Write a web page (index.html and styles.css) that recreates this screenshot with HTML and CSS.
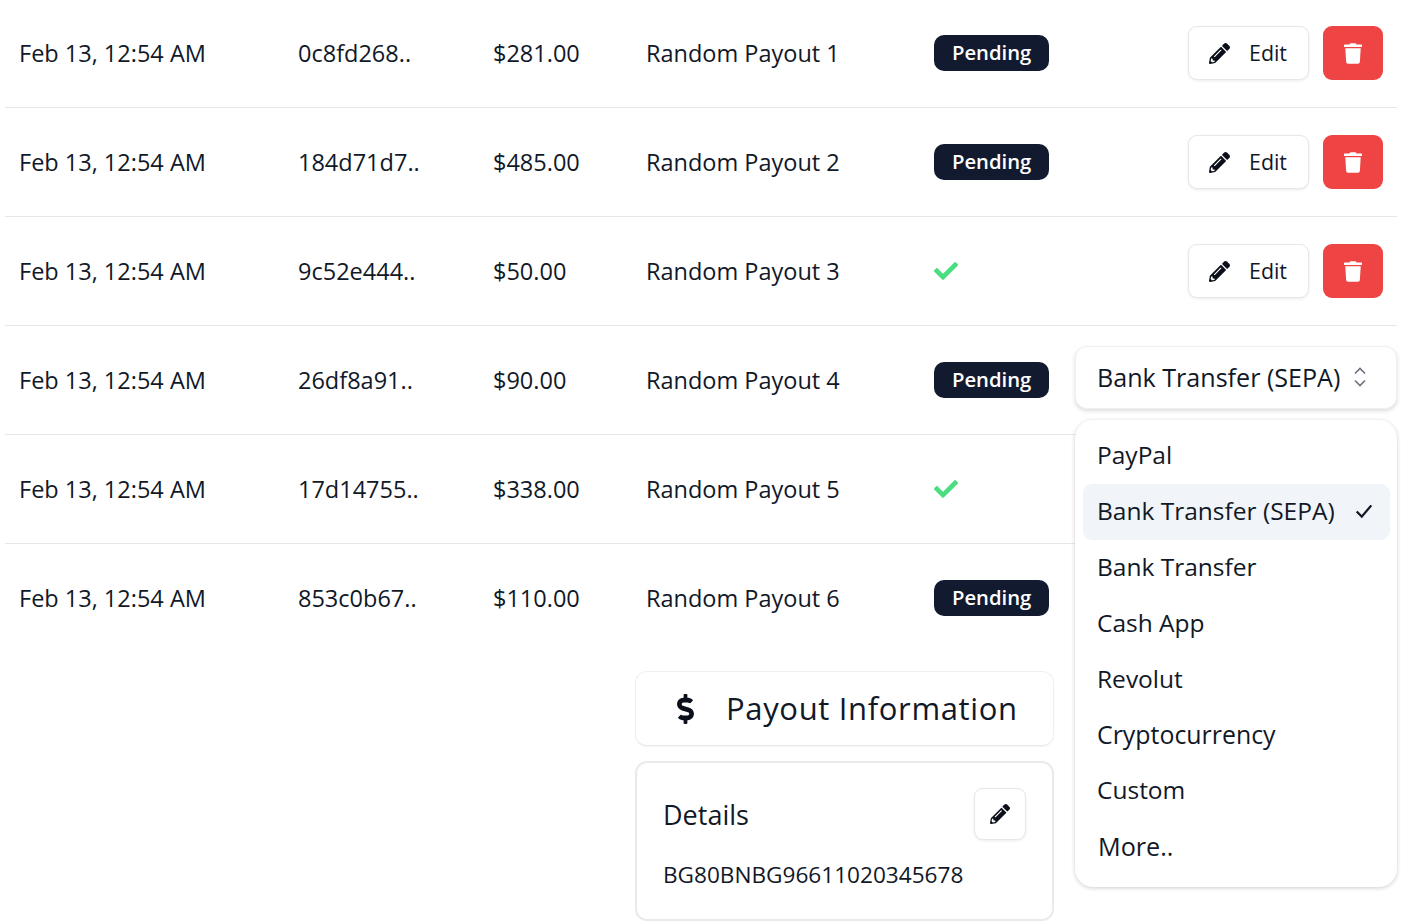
FILE: index.html
```html
<!DOCTYPE html>
<html>
<head>
	<title>Payouts</title>
	<meta charset="UTF-8">
	<link rel="stylesheet" href="styles.css">
</head>
<body>
	<svg class="icon-defs" aria-hidden="true">
		<symbol id="i-pencil" viewBox="0 0 512 512"><path d="M497.9 142.1l-46.1 46.1c-4.7 4.7-12.3 4.7-17 0l-111-111c-4.7-4.7-4.7-12.3 0-17l46.1-46.1c18.7-18.7 49.1-18.7 67.9 0l60.1 60.1c18.8 18.7 18.8 49.1 0 67.9zM284.2 99.8L21.6 362.4.4 483.9c-2.9 16.4 11.4 30.6 27.8 27.8l121.5-21.3 262.6-262.6c4.7-4.7 4.7-12.3 0-17l-111-111c-4.8-4.7-12.4-4.7-17.1 0zM124.1 339.9c-5.5-5.5-5.5-14.3 0-19.8l154-154c5.5-5.5 14.3-5.5 19.8 0s5.5 14.3 0 19.8l-154 154c-5.5 5.5-14.3 5.5-19.8 0zM88 424h48v36.3l-64.5 11.3-31.1-31.1L51.7 376H88v48z"/></symbol>
		<symbol id="i-trash" viewBox="0 0 448 512"><path d="M432 32H312l-9.4-18.7A24 24 0 0 0 281.1 0H166.8a23.72 23.72 0 0 0-21.4 13.3L136 32H16A16 16 0 0 0 0 48v32a16 16 0 0 0 16 16h416a16 16 0 0 0 16-16V48a16 16 0 0 0-16-16zM53.2 467a48 48 0 0 0 47.9 45h245.8a48 48 0 0 0 47.9-45L416 128H32z"/></symbol>
		<symbol id="i-check" viewBox="0 0 512 512"><path d="M173.898 439.404l-166.4-166.4c-9.997-9.997-9.997-26.206 0-36.204l36.203-36.204c9.997-9.998 26.207-9.998 36.204 0L192 312.69 432.095 72.596c9.997-9.997 26.207-9.997 36.204 0l36.203 36.204c9.997 9.997 9.997 26.206 0 36.204l-294.4 294.401c-9.998 9.997-26.207 9.997-36.204-.001z"/></symbol>
	</svg>

	<div class="payout-table">
		<div class="row">
			<div>Feb 13, 12:54 AM</div>
			<div>0c8fd268..</div>
			<div>$281.00</div>
			<div>Random Payout 1</div>
			<div><span class="badge">Pending</span></div>
			<div class="actions">
				<button class="btn-edit"><svg class="icon-pencil"><use href="#i-pencil"/></svg><span class="edit-label">Edit</span></button>
				<button class="btn-delete"><svg class="icon-trash"><use href="#i-trash"/></svg></button>
			</div>
		</div>
		<div class="row">
			<div>Feb 13, 12:54 AM</div>
			<div>184d71d7..</div>
			<div>$485.00</div>
			<div>Random Payout 2</div>
			<div><span class="badge">Pending</span></div>
			<div class="actions">
				<button class="btn-edit"><svg class="icon-pencil"><use href="#i-pencil"/></svg><span class="edit-label">Edit</span></button>
				<button class="btn-delete"><svg class="icon-trash"><use href="#i-trash"/></svg></button>
			</div>
		</div>
		<div class="row">
			<div>Feb 13, 12:54 AM</div>
			<div>9c52e444..</div>
			<div>$50.00</div>
			<div>Random Payout 3</div>
			<div><svg class="icon-check"><use href="#i-check"/></svg></div>
			<div class="actions">
				<button class="btn-edit"><svg class="icon-pencil"><use href="#i-pencil"/></svg><span class="edit-label">Edit</span></button>
				<button class="btn-delete"><svg class="icon-trash"><use href="#i-trash"/></svg></button>
			</div>
		</div>
		<div class="row">
			<div>Feb 13, 12:54 AM</div>
			<div>26df8a91..</div>
			<div>$90.00</div>
			<div>Random Payout 4</div>
			<div><span class="badge">Pending</span></div>
			<div></div>
		</div>
		<div class="row">
			<div>Feb 13, 12:54 AM</div>
			<div>17d14755..</div>
			<div>$338.00</div>
			<div>Random Payout 5</div>
			<div><svg class="icon-check"><use href="#i-check"/></svg></div>
			<div></div>
		</div>
		<div class="row">
			<div>Feb 13, 12:54 AM</div>
			<div>853c0b67..</div>
			<div>$110.00</div>
			<div>Random Payout 6</div>
			<div><span class="badge">Pending</span></div>
			<div></div>
		</div>
	</div>

	<div class="info">
		<div class="info-title">
			<svg class="icon-dollar" viewBox="0 0 288 512"><path d="M209.2 233.4l-108-31.6C88.7 198.2 80 186.5 80 173.5c0-16.3 13.2-29.5 29.5-29.5h66.3c12.2 0 24.2 3.7 34.2 10.5 6.1 4.1 14.3 3.1 19.5-2l34.8-34c7.1-6.9 6.1-18.4-1.8-24.5C238 74.8 207.4 64.1 176 64V16c0-8.8-7.2-16-16-16h-32c-8.8 0-16 7.2-16 16v48h-2.5C45.8 64-5.4 118.7.5 183.6c4.2 46.1 39.4 83.6 83.8 96.6l102.5 30c12.5 3.7 21.2 15.3 21.2 28.3 0 16.3-13.2 29.5-29.5 29.5h-66.3C100 368 88 364.3 78 357.5c-6.1-4.1-14.3-3.1-19.5 2l-34.8 34c-7.1 6.9-6.1 18.4 1.8 24.5 24.5 19.2 55.1 29.9 86.5 30v48c0 8.8 7.2 16 16 16h32c8.8 0 16-7.2 16-16v-48.2c46.6-.9 90.3-28.6 105.7-72.7 21.5-61.6-14.6-124.8-72.5-141.7z"/></svg>
			<span class="info-label">Payout Information</span>
		</div>
		<div class="info-details">
			<div class="details-head">
				<span>Details</span>
				<button class="btn-icon"><svg class="icon-pencil-small"><use href="#i-pencil"/></svg></button>
			</div>
			<div class="details-iban">BG80BNBG96611020345678</div>
		</div>
	</div>

	<button class="select-btn">
		<span>Bank Transfer (SEPA)</span>
		<svg class="icon-updown" viewBox="0 0 14 24"><path d="M2 8.5 7 3.5l5 5M2 15.5l5 5 5-5"/></svg>
	</button>

	<div class="select-menu">
		<div class="option">PayPal</div>
		<div class="option selected">Bank Transfer (SEPA)<svg class="icon-tick" viewBox="0 0 16 16"><path d="M1.5 8.5 6 13l8.5-10"/></svg></div>
		<div class="option">Bank Transfer</div>
		<div class="option">Cash App</div>
		<div class="option">Revolut</div>
		<div class="option option-crypto">Cryptocurrency</div>
		<div class="option option-custom">Custom</div>
		<div class="option option-more">More..</div>
	</div>
</body>
</html>
```

FILE: styles.css
```css
html, body {
	margin: 0;
	padding: 0;
}

body {
	position: relative;
	height: 921px;
	overflow: hidden;
	background-color: #fff;
	color: #111827;
	font-family: "Open Sans", sans-serif;
	font-size: 23.5px;
}

.icon-defs {
	display: none;
}

.payout-table {
	margin: -1px 21px 0 5px;
}

.row {
	display: grid;
	grid-template-columns: 279px 195px 153px 288px 1fr 250px;
	align-items: center;
	height: 108px;
	padding: 0 14px;
	border-bottom: 1px solid #e5e7eb;
}

.row:last-child {
	border-bottom: none;
}

.badge {
	display: inline-block;
	padding: 0 18px 1px;
	border-radius: 10px;
	background-color: #111a2e;
	color: #fff;
	font-size: 20.25px;
	font-weight: 600;
	line-height: 35px;
}

.row > div:nth-child(5) {
	display: flex;
	align-items: center;
}

.icon-check {
	width: 24px;
	height: 24px;
	fill: #4ade80;
}

.actions {
	display: flex;
	justify-content: flex-end;
	gap: 14px;
}

button {
	font-family: inherit;
	color: inherit;
	cursor: pointer;
}

.btn-edit {
	display: flex;
	align-items: center;
	gap: 19px;
	width: 121px;
	height: 54px;
	padding: 0 0 0 20px;
	border: 1px solid #e5e7eb;
	border-radius: 9px;
	background-color: #fff;
	box-shadow: 0 1px 3px rgba(0, 0, 0, 0.08);
	font-size: 21.4px;
}

.edit-label {
	padding-bottom: 2px;
}

.icon-pencil {
	width: 21px;
	height: 21px;
	fill: #0b0f19;
}

.btn-delete {
	display: flex;
	align-items: center;
	justify-content: center;
	width: 60px;
	height: 54px;
	padding: 0;
	border: none;
	border-radius: 9px;
	background-color: #ef4444;
}

.icon-trash {
	width: 18px;
	height: 21px;
	fill: #fff;
}

.info {
	display: flex;
	flex-direction: column;
	gap: 15px;
	width: 419px;
	margin: 19px 0 0 635px;
}

.info-title {
	display: flex;
	align-items: center;
	gap: 31px;
	box-sizing: border-box;
	height: 75px;
	padding-left: 40px;
	border: 1px solid #eef0f3;
	border-bottom-color: #e5e7eb;
	border-radius: 12px;
	box-shadow: 0 1px 2px rgba(0, 0, 0, 0.05);
	font-size: 31px;
	letter-spacing: 0.65px;
}

.info-label {
	padding-bottom: 2px;
}

.icon-dollar {
	width: 19px;
	height: 30px;
	fill: #0b0f19;
}

.info-details {
	box-sizing: border-box;
	height: 160px;
	padding: 25px 26px 0 26px;
	border: 2px solid #e8eaee;
	border-radius: 12px;
}

.details-head {
	display: flex;
	align-items: center;
	justify-content: space-between;
	font-size: 27px;
}

.btn-icon {
	display: flex;
	align-items: center;
	justify-content: center;
	width: 52px;
	height: 52px;
	padding: 0;
	border: 1px solid #e5e7eb;
	border-radius: 9px;
	background-color: #fff;
	box-shadow: 0 1px 3px rgba(0, 0, 0, 0.08);
}

.icon-pencil-small {
	width: 20px;
	height: 20px;
	fill: #0b0f19;
}

.details-iban {
	margin-top: 19px;
	font-size: 22.6px;
}

.select-btn {
	position: absolute;
	top: 346px;
	left: 1075px;
	display: flex;
	align-items: center;
	gap: 13px;
	box-sizing: border-box;
	width: 322px;
	height: 63px;
	padding: 0 0 2px 21px;
	border: 1px solid #eef0f3;
	border-radius: 12px;
	background-color: #fff;
	box-shadow: 0 2px 4px rgba(0, 0, 0, 0.14);
	font-size: 25.1px;
	white-space: nowrap;
}

.icon-updown {
	width: 14px;
	height: 24px;
	fill: none;
	stroke: #6b7280;
	stroke-width: 1.6;
}

.select-menu {
	position: absolute;
	top: 420px;
	left: 1075px;
	box-sizing: border-box;
	width: 322px;
	height: 467px;
	padding: 7px 7px 0 8px;
	border-radius: 18px;
	background-color: #fff;
	box-shadow: 0 1px 4px rgba(0, 0, 0, 0.2);
}

.option {
	display: flex;
	align-items: center;
	justify-content: space-between;
	box-sizing: border-box;
	height: 56px;
	padding: 0 17px 2px 14px;
	border-radius: 9px;
	font-size: 24.5px;
	white-space: nowrap;
}

.option.selected {
	margin-top: 1px;
	margin-bottom: -1px;
	padding-bottom: 3px;
	background-color: #f1f5f9;
}

.option-crypto {
	font-size: 24.9px;
}

.option-custom {
	padding-bottom: 3px;
}

.option-more {
	padding-left: 15px;
	font-size: 25.2px;
}

.icon-tick {
	width: 18px;
	height: 18px;
	fill: none;
	stroke: #111827;
	stroke-width: 2;
}
```
